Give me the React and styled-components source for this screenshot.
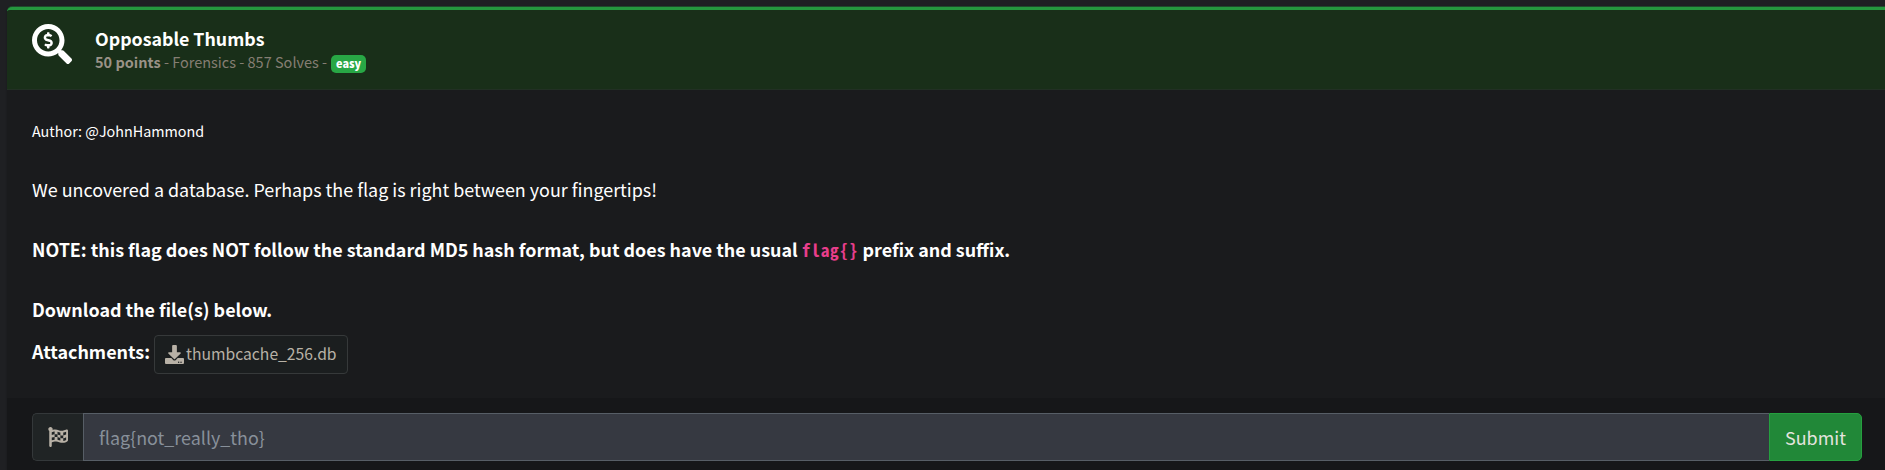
import React from "react";
import styled, { createGlobalStyle } from "styled-components";
import { FaSearchDollar, FaDownload, FaFlagCheckered } from "react-icons/fa";

const Global = createGlobalStyle`
  * { box-sizing: border-box; }
  html, body { margin: 0; background: #1f2023; }
  body {
    height: 470px;
    overflow: hidden;
    color: #fff;
    font: 17.92px/30px "Noto Sans CJK JP", "Noto Sans", sans-serif;
  }
`;

const Card = styled.article`
  margin: 7px 0 0 7px;
  height: 463px;
  display: flex;
  flex-direction: column;
  background: #1a1b1d;
  border-top: 3px solid #25983e;
  border-radius: 5px 0 0 0;
  box-shadow: 0 -1px 0 #204a2c, 0 0 2px rgba(0, 0, 0, 0.3);
  overflow: hidden;
`;

const Header = styled.header`
  height: 80px;
  padding: 14px 25px 0;
  display: flex;
  gap: 23px;
  background: #192f19;
  border-bottom: 1px solid #223024;
`;

const Heading = styled.div`
  display: flex;
  flex-direction: column;
  margin-top: -1px;
`;

const Title = styled.h1`
  margin: 0;
  font-size: 17.8px;
  line-height: 30px;
  font-weight: 700;
  white-space: nowrap;
`;

const Meta = styled.div`
  display: flex;
  align-items: center;
  gap: 4px;
  margin-top: -6px;
  font-size: 14.5px;
  line-height: 30px;
  color: #857e73;
  white-space: nowrap;
  b { color: #9a9287; }
`;

const Badge = styled.span`
  height: 18px;
  margin-top: 3px;
  padding: 0 5px;
  border-radius: 5px;
  background: #28a745;
  color: #fff;
  font-size: 10.9px;
  line-height: 17px;
  font-weight: 900;
`;

const Body = styled.section`
  height: 308px;
  padding: 24px 25px 0;
`;

const Line = styled.p`
  margin: 0 0 ${(p) => p.$gap ?? 30}px;
  height: 30px;
  font-weight: ${(p) => (p.$bold ? 700 : 400)};
  white-space: nowrap;
`;

const Small = styled.span`
  font-size: 14.35px;
`;

const Code = styled.code`
  font: 700 17.4px/1 "Noto Sans Mono CJK JP", "DejaVu Sans Mono", monospace;
  letter-spacing: 0.75px;
  color: #e83e8c;
`;

const Attachments = styled.div`
  display: flex;
  gap: 4px;
  font-weight: 700;
  span { padding-top: 2px; }
`;

const FileButton = styled.button`
  height: 39px;
  width: 194px;
  margin-top: 1px;
  padding: 0 0 1px 10px;
  display: flex;
  align-items: center;
  gap: 2px;
  border: 1px solid #36393a;
  border-radius: 4px;
  background: #1b1e1f;
  color: #b8b1a6;
  font: inherit;
  font-weight: 400;
  font-size: 15.7px;
`;

const Footer = styled.form`
  flex: 1;
  padding: 15px 23px 0 25px;
  background: #161719;
`;

const InputGroup = styled.div`
  display: flex;
  height: 48px;
`;

const Addon = styled.div`
  width: 51px;
  display: flex;
  align-items: center;
  justify-content: center;
  border: 1px solid #34383a;
  border-right: 0;
  border-radius: 5px 0 0 5px;
  background: #202425;
  color: #b8b1a6;
`;

const FlagInput = styled.input`
  flex: 1;
  min-width: 0;
  padding: 0 15px;
  border: 1px solid #575e66;
  border-right: 0;
  border-radius: 0;
  outline: 0;
  background: #363941;
  color: #fff;
  font: inherit;
  &::placeholder { color: #88909a; opacity: 1; }
`;

const Submit = styled.button`
  width: 93px;
  padding: 0;
  border: 1px solid #25a03f;
  border-radius: 0 5px 5px 0;
  background: #218838;
  color: #e4e4df;
  font: inherit;
`;

export default function App() {
  return (
    <>
      <Global />
      <Card>
        <Header>
          <FaSearchDollar size={40} />
          <Heading>
            <Title>Opposable Thumbs</Title>
            <Meta>
              <span><b>50 points</b> - Forensics - 857 Solves -</span>
              <Badge>easy</Badge>
            </Meta>
          </Heading>
        </Header>
        <Body>
          <Line><Small>Author: @JohnHammond</Small></Line>
          <Line>We uncovered a database. Perhaps the flag is right between your fingertips!</Line>
          <Line $bold>
            NOTE: this flag does NOT follow the standard MD5 hash format, but does have the usual <Code>flag{"{}"}</Code> prefix and suffix.
          </Line>
          <Line $bold $gap={10}>Download the file(s) below.</Line>
          <Attachments>
            <span>Attachments:</span>
            <FileButton type="button"><FaDownload size={19} />thumbcache_256.db</FileButton>
          </Attachments>
        </Body>
        <Footer onSubmit={(e) => e.preventDefault()}>
          <InputGroup>
            <Addon><FaFlagCheckered size={20} /></Addon>
            <FlagInput placeholder="flag{not_really_tho}" />
            <Submit type="submit">Submit</Submit>
          </InputGroup>
        </Footer>
      </Card>
    </>
  );
}
